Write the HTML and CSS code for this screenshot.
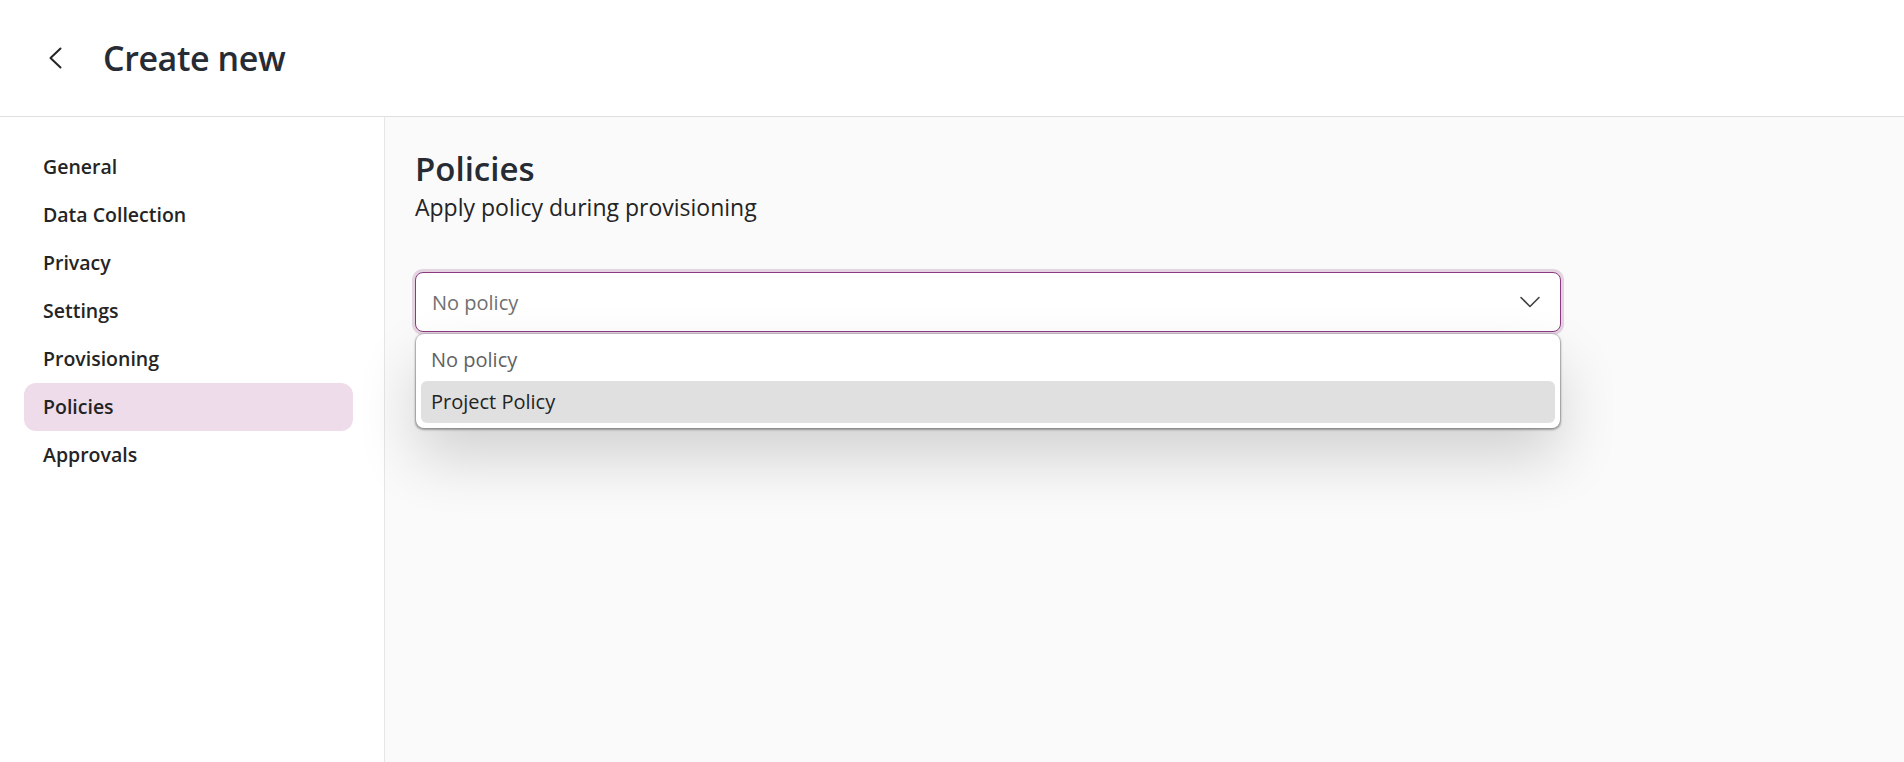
FILE: index.html
```html
<!DOCTYPE html>
<html lang="en">
<head>
<meta charset="utf-8">
<title>Create new</title>
<link rel="stylesheet" href="styles.css">
</head>
<body>
<header class="topbar">
  <button class="back" aria-label="Back">
    <svg width="14" height="22" viewBox="0 0 14 22"><path d="M12.5 1.5 L2.5 11 L12.5 20.5" fill="none" stroke="#242424" stroke-width="2" stroke-linecap="round" stroke-linejoin="round"/></svg>
  </button>
  <h1 class="page-title">Create new</h1>
</header>
<div class="layout">
  <nav class="sidebar">
    <a class="nav-item">General</a>
    <a class="nav-item">Data Collection</a>
    <a class="nav-item">Privacy</a>
    <a class="nav-item">Settings</a>
    <a class="nav-item">Provisioning</a>
    <a class="nav-item selected">Policies</a>
    <a class="nav-item">Approvals</a>
  </nav>
  <main class="content">
    <h2 class="section-title">Policies</h2>
    <p class="section-sub">Apply policy during provisioning</p>
    <div class="combo">
      <div class="combo-field">
        <span class="combo-value">No policy</span>
        <svg class="chev" width="20" height="12" viewBox="0 0 20 12"><path d="M1 1.5 L10 10.5 L19 1.5" fill="none" stroke="#424242" stroke-width="1.6" stroke-linecap="round" stroke-linejoin="round"/></svg>
      </div>
      <div class="listbox">
        <div class="option">No policy</div>
        <div class="option active">Project Policy</div>
      </div>
    </div>
  </main>
</div>
</body>
</html>
```
FILE: styles.css
```css
html, body {
  margin: 0;
  padding: 0;
}
body {
  font-family: "Open Sans", "Noto Sans", sans-serif;
  background: #ffffff;
  color: #242424;
  height: 762px;
  overflow: hidden;
}
.topbar {
  height: 116px;
  border-bottom: 1px solid #e0e0e0;
  display: flex;
  align-items: center;
  padding-left: 48px;
  box-sizing: content-box;
}
.back {
  background: none;
  border: 0;
  padding: 0;
  width: 14px;
  height: 22px;
  margin-right: 41px;
  display: flex;
}
.page-title {
  margin: 0;
  font-size: 34px;
  font-weight: 600;
  color: #262b34;
  letter-spacing: -0.4px;
}
.layout {
  display: flex;
  height: 645px;
}
.sidebar {
  width: 385px;
  box-sizing: border-box;
  border-right: 1px solid #e6e6e6;
  padding: 26px 31px 0 24px;
  display: flex;
  flex-direction: column;
}
.nav-item {
  display: block;
  height: 48px;
  line-height: 48px;
  padding-left: 19px;
  border-radius: 12px;
  font-size: 19.5px;
  font-weight: 600;
  color: #242424;
}
.nav-item.selected {
  background: #eedcea;
}
.content {
  flex: 1;
  background: #fafafa;
  padding: 30px 30px 0 30px;
}
.section-title {
  margin: 0;
  font-size: 33px;
  font-weight: 600;
  line-height: 44px;
  color: #262b34;
}
.section-sub {
  margin: 0;
  font-size: 23px;
  line-height: 32px;
  color: #242424;
}
.combo {
  position: relative;
  width: 1146px;
  margin-top: 49px;
}
.combo-field {
  height: 60px;
  box-sizing: border-box;
  border: 1px solid #8b3a7f;
  border-radius: 8px;
  box-shadow: 0 0 0 3px #e4d3e0;
  background: #ffffff;
  display: flex;
  align-items: center;
  justify-content: space-between;
  padding: 0 20px 0 16px;
}
.combo-value {
  font-size: 20px;
  color: #707070;
}
.listbox {
  position: absolute;
  top: 62px;
  left: 1px;
  right: 1px;
  background: #ffffff;
  border-radius: 8px;
  padding: 5px;
  box-shadow: 0 0 0 1px rgba(0,0,0,0.06), 0 1px 2px 0.5px rgba(0,0,0,0.32), 0 30px 60px rgba(0,0,0,0.16);
}
.option {
  height: 42px;
  line-height: 42px;
  padding-left: 10px;
  font-size: 20px;
  color: #616161;
  border-radius: 6px;
}
.option.active {
  background: #e0e0e0;
  color: #242424;
}
```
